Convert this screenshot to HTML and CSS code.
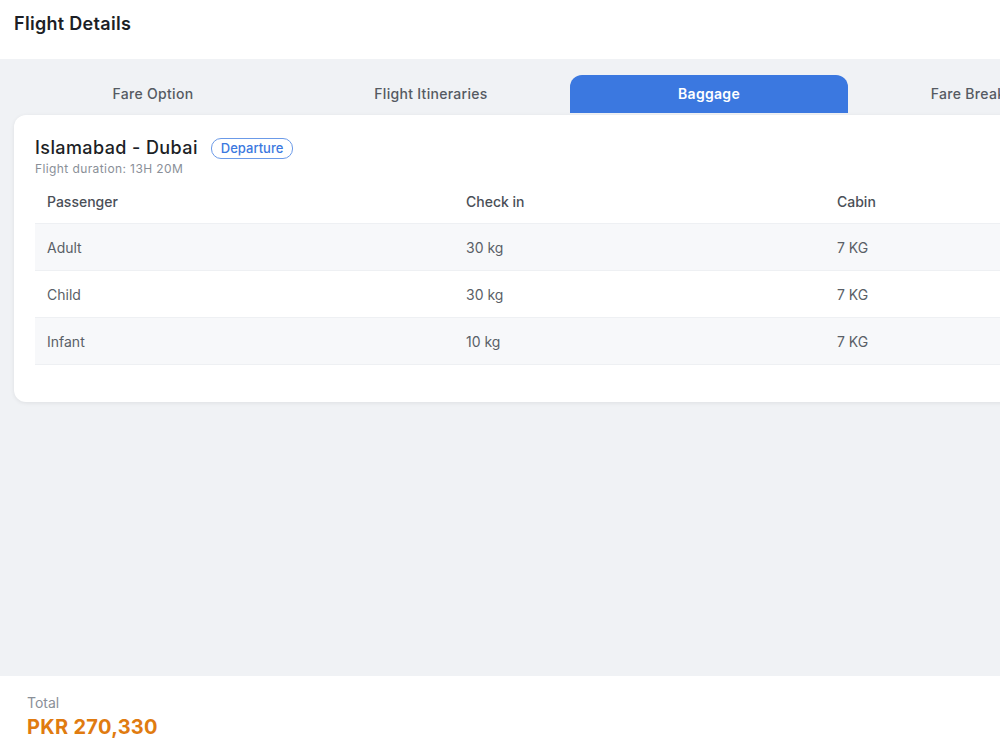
FILE: index.html
```html
<!DOCTYPE html>
<html lang="en">
<head>
    <meta charset="UTF-8">
    <meta name="viewport" content="width=device-width, initial-scale=1.0">
    <title>Flight Details</title>
    <link rel="stylesheet" href="styles.css">
</head>
<body>
    <header class="top-bar">
        <h1>Flight Details</h1>
    </header>

    <main class="content">
        <nav class="tabs">
            <div class="tab">Fare Option</div>
            <div class="tab">Flight Itineraries</div>
            <div class="tab active">Baggage</div>
            <div class="tab">Fare Breakdown</div>
        </nav>

        <section class="card">
            <div class="route">
                <h2>Islamabad - Dubai</h2>
                <span class="badge">Departure</span>
            </div>
            <div class="duration">Flight duration: 13H 20M</div>

            <div class="baggage-table">
                <div class="row head">
                    <div>Passenger</div>
                    <div>Check in</div>
                    <div>Cabin</div>
                </div>
                <div class="row shaded">
                    <div>Adult</div>
                    <div>30 kg</div>
                    <div>7 KG</div>
                </div>
                <div class="row">
                    <div>Child</div>
                    <div>30 kg</div>
                    <div>7 KG</div>
                </div>
                <div class="row shaded">
                    <div>Infant</div>
                    <div>10 kg</div>
                    <div>7 KG</div>
                </div>
            </div>
        </section>
    </main>

    <footer class="total-bar">
        <div class="total-label">Total</div>
        <div class="total-amount">PKR 270,330</div>
    </footer>
</body>
</html>
```

FILE: styles.css
```css
body {
    margin: 0;
    font-family: Inter, "Noto Sans", sans-serif;
    background-color: #fff;
    overflow: hidden;
    color: #222;
}

.top-bar {
    height: 59px;
    padding: 14px 0 0 14px;
    box-sizing: border-box;
}

.top-bar h1 {
    margin: 0;
    font-size: 18px;
    line-height: 20px;
    font-weight: 600;
    letter-spacing: 0.3px;
    color: #1c1f26;
}

.content {
    height: 617px;
    box-sizing: border-box;
    padding: 16px 0 0 14px;
    background-color: #f0f2f5;
    overflow: hidden;
}

.tabs {
    display: flex;
    width: 1112px;
}

.tab {
    width: 278px;
    flex-shrink: 0;
    height: 38px;
    line-height: 38px;
    text-align: center;
    font-size: 14px;
    font-weight: 500;
    letter-spacing: 0.3px;
    color: #555a62;
}

.tab.active {
    background-color: #3b78e0;
    color: #fff;
    font-weight: 600;
    border-radius: 12px 12px 0 0;
}

.card {
    width: 1100px;
    margin-top: 2px;
    padding: 21px 21px 37px;
    box-sizing: border-box;
    background: #fff;
    border-radius: 12px;
    box-shadow: 0 1px 4px rgba(0, 0, 0, 0.08);
}

.route {
    display: flex;
    align-items: center;
    gap: 13px;
}

.route h2 {
    margin: 0;
    font-size: 18px;
    line-height: 24px;
    font-weight: 500;
    letter-spacing: 0.4px;
    color: #1c1f26;
}

.badge {
    display: inline-block;
    padding: 0 9px;
    height: 19px;
    line-height: 19px;
    font-size: 13px;
    font-weight: 500;
    color: #3b78e0;
    border: 1px solid #6b9ae8;
    border-radius: 10px;
}

.duration {
    margin-top: 1px;
    font-size: 12px;
    line-height: 16px;
    letter-spacing: 0.4px;
    color: #8a8f98;
}

.baggage-table {
    margin-top: 2px;
}

.row {
    display: grid;
    grid-template-columns: 419px 371px 290px;
    height: 47px;
    align-items: center;
    border-bottom: 1px solid #eef0f3;
    box-sizing: border-box;
    font-size: 14px;
    color: #5a5f67;
}

.row > div {
    padding-left: 12px;
}

.row.head {
    height: 45px;
    font-weight: 500;
    color: #4a4f57;
}

.row.shaded {
    background-color: #f7f8fa;
}

.total-bar {
    height: 74px;
    box-sizing: border-box;
    padding: 18px 0 0 27px;
    background: #fff;
}

.total-label {
    font-size: 14px;
    line-height: 18px;
    color: #8a8f98;
}

.total-amount {
    margin-top: 2px;
    font-size: 20px;
    line-height: 26px;
    font-weight: 700;
    letter-spacing: 0.3px;
    color: #e07b10;
}
```
